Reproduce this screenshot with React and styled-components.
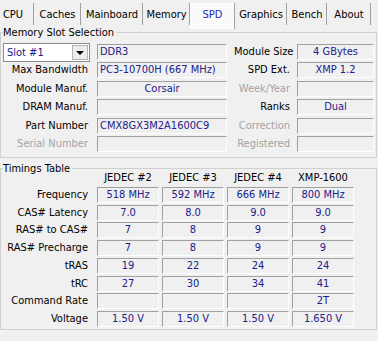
import React from 'react';
import styled, { createGlobalStyle } from 'styled-components';

const GlobalStyle = createGlobalStyle`
  html, body {
    margin: 0;
    padding: 0;
    background: #f0f0f0;
  }
  body {
    font-family: "DejaVu Sans Condensed", "DejaVu Sans", "Liberation Sans", Arial, sans-serif;
    font-stretch: condensed;
    font-size: 11px;
    color: #000;
  }
`;

const Window = styled.div`
  width: 378px;
  height: 341px;
  overflow: hidden;
  background: #f0f0f0;
`;

const TabBar = styled.div`
  display: flex;
  align-items: flex-start;
  height: 26px;
  padding-top: 3px;
  box-sizing: border-box;
`;

const Tab = styled.div`
  box-sizing: border-box;
  width: ${(p) => p.w}px;
  height: ${(p) => (p.active ? 26 : 22)}px;
  padding: 5px ${(p) => p.pr || 0}px 0 0;
  line-height: 13px;
  text-align: center;
  white-space: nowrap;
  color: ${(p) => (p.active ? '#1f1fc8' : '#000')};
  background: ${(p) => (p.active ? '#fafafa' : 'transparent')};
  border-left: 1px solid ${(p) => (p.active ? '#ffffff' : 'transparent')};
  border-right: 1px solid #a0a0a0;
  position: relative;
  z-index: ${(p) => (p.active ? 1 : 0)};
`;

const Group = styled.fieldset`
  margin: ${(p) => p.mt || 0}px 1px 0 0;
  padding: ${(p) => p.pt}px 0 ${(p) => p.pb}px 2px;
  border: 1px solid #d0d0d0;
  min-width: 0;
`;

const Legend = styled.legend`
  padding: 0 2px 0 0;
  margin: 0;
  line-height: 13px;
  background: #f0f0f0;
`;

const SlotGrid = styled.div`
  display: grid;
  grid-template-columns: 87px 130px 56px 77px;
  grid-template-rows: repeat(6, 16px);
  column-gap: 7px;
  row-gap: 2.4px;
`;

const Label = styled.div`
  line-height: 16px;
  text-align: right;
  white-space: nowrap;
  padding-right: ${(p) => p.pr || 0}px;
  color: ${(p) => (p.disabled ? '#a3a3a3' : '#000')};
`;

const Field = styled.div`
  box-sizing: border-box;
  height: 16px;
  line-height: 14px;
  padding: 0 2px;
  white-space: nowrap;
  overflow: hidden;
  text-align: ${(p) => p.align || 'center'};
  color: #20208a;
  background: #f0f0f0;
  border-top: 1px solid #a0a0a0;
  border-left: 1px solid #a0a0a0;
  border-right: 1px solid #ffffff;
  border-bottom: 1px solid #ffffff;
`;

const Select = styled.div`
  box-sizing: border-box;
  height: 19px;
  margin-top: -1px;
  display: flex;
  align-items: center;
  justify-content: space-between;
  padding: 0 1px 0 3px;
  background: #ffffff;
  border: 1px solid #8c8c8c;
  color: #20208a;
`;

const DropButton = styled.div`
  box-sizing: border-box;
  width: 16px;
  height: 15px;
  display: flex;
  align-items: center;
  justify-content: center;
  background: #ececec;
  border: 1px solid #b4b4b4;

  &::before {
    content: '';
    border-left: 4px solid transparent;
    border-right: 4px solid transparent;
    border-top: 4px solid #000;
  }
`;

const TimingGrid = styled.div`
  display: grid;
  grid-template-columns: 91px repeat(4, 62px);
  grid-template-rows: 14.25px repeat(8, 16px);
  column-gap: 3px;
  row-gap: 1.75px;
  margin-top: -4px;
`;

const Head = styled.div`
  line-height: 13px;
  text-align: center;
  white-space: nowrap;
`;

const tabs = [
  { name: 'CPU', w: 34, pr: 8 },
  { name: 'Caches', w: 47 },
  { name: 'Mainboard', w: 62 },
  { name: 'Memory', w: 47 },
  { name: 'SPD', w: 45, active: true },
  { name: 'Graphics', w: 52 },
  { name: 'Bench', w: 40 },
  { name: 'About', w: 44 },
];

const slotRows = [
  { left: 'Max Bandwidth', value: 'PC3-10700H (667 MHz)', align: 'left', right: 'SPD Ext.', rv: 'XMP 1.2' },
  { left: 'Module Manuf.', value: 'Corsair', right: 'Week/Year', rv: '', rdis: true },
  { left: 'DRAM Manuf.', value: '', right: 'Ranks', rv: 'Dual' },
  { left: 'Part Number', value: 'CMX8GX3M2A1600C9', align: 'left', right: 'Correction', rv: '', rdis: true },
  { left: 'Serial Number', value: '', ldis: true, right: 'Registered', rv: '', rdis: true },
];

const heads = ['JEDEC #2', 'JEDEC #3', 'JEDEC #4', 'XMP-1600'];

const timings = [
  ['Frequency', '518 MHz', '592 MHz', '666 MHz', '800 MHz'],
  ['CAS# Latency', '7.0', '8.0', '9.0', '9.0'],
  ['RAS# to CAS#', '7', '8', '9', '9'],
  ['RAS# Precharge', '7', '8', '9', '9'],
  ['tRAS', '19', '22', '24', '24'],
  ['tRC', '27', '30', '34', '41'],
  ['Command Rate', '', '', '', '2T'],
  ['Voltage', '1.50 V', '1.50 V', '1.50 V', '1.650 V'],
];

export default function App() {
  return (
    <Window>
      <GlobalStyle />
      <TabBar>
        {tabs.map((t) => (
          <Tab key={t.name} w={t.w} pr={t.pr} active={t.active}>
            {t.name}
          </Tab>
        ))}
      </TabBar>

      <Group pt={5} pb={5}>
        <Legend>Memory Slot Selection</Legend>
        <SlotGrid>
          <Select>
            <span>Slot #1</span>
            <DropButton />
          </Select>
          <Field align="left">DDR3</Field>
          <Label>Module Size</Label>
          <Field>4 GBytes</Field>
          {slotRows.map((r) => (
            <React.Fragment key={r.left}>
              <Label pr={2} disabled={r.ldis}>{r.left}</Label>
              <Field align={r.align}>{r.value}</Field>
              <Label disabled={r.rdis}>{r.right}</Label>
              <Field>{r.rv}</Field>
            </React.Fragment>
          ))}
        </SlotGrid>
      </Group>

      <Group mt={4} pt={0} pb={2}>
        <Legend>Timings Table</Legend>
        <TimingGrid>
          <div />
          {heads.map((h) => (
            <Head key={h}>{h}</Head>
          ))}
          {timings.map(([name, ...vals]) => (
            <React.Fragment key={name}>
              <Label pr={6}>{name}</Label>
              {vals.map((v, i) => (
                <Field key={i}>{v}</Field>
              ))}
            </React.Fragment>
          ))}
        </TimingGrid>
      </Group>
    </Window>
  );
}
